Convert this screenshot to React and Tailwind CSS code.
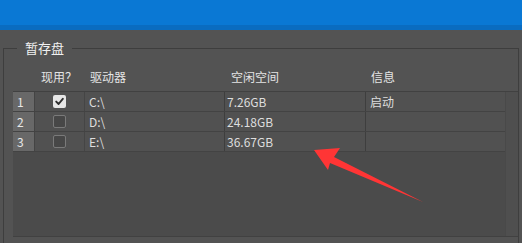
import React from "react";

const rows = [
  { n: "1", checked: true, drive: "C:\\", free: "7.26GB", info: "启动" },
  { n: "2", checked: false, drive: "D:\\", free: "24.18GB", info: "" },
  { n: "3", checked: false, drive: "E:\\", free: "36.67GB", info: "" },
];

function Check({ checked }) {
  if (checked) {
    return (
      <div className="w-[13px] h-[13px] rounded-[2px] bg-[#e6e6e6] flex items-center justify-center">
        <svg width="9" height="9" viewBox="0 0 9 9">
          <path d="M1.2 4.6 L3.6 7 L7.8 1.8" stroke="#2e2e2e" strokeWidth="1.9" fill="none" strokeLinecap="round" strokeLinejoin="round" />
        </svg>
      </div>
    );
  }
  return <div className="w-[13px] h-[13px] rounded-[2px] bg-[#474747] border border-[#7a7a7a]" />;
}

export default function App() {
  return (
    <div
      className="relative w-[522px] h-[243px] overflow-hidden bg-[#535353] text-[#e2e2e2]"
      style={{ fontFamily: '"Noto Sans CJK SC", "Noto Sans", sans-serif' }}
    >
      <div className="h-[25px] bg-[#0a78d4]" />
      <div className="h-[5px] bg-[#0a6cc0]" />

      <div className="relative mt-[18px] ml-[3px] w-[516px] h-[210px] border-t border-l border-r border-[#3e3e3e]">
        <div className="absolute left-[13px] top-[-10px] px-[8px] bg-[#535353] text-[13px] leading-[18px] text-[#f0f0f0]">
          暂存盘
        </div>

        <div className="mt-[14px] ml-[9px] flex h-[28px] text-[12px] leading-[28px] text-[#e4e4e4]">
          <div className="w-[22px]" />
          <div className="w-[50px] pl-[6px]">现用？</div>
          <div className="w-[140px] pl-[5px]">驱动器</div>
          <div className="w-[141px] pl-[6px]">空闲空间</div>
          <div className="w-[139px] pl-[5px]">信息</div>
        </div>

        <div className="ml-[9px] flex h-[146px] border-t border-b border-[#414141]">
          <div className="w-[492px] bg-[#4b4b4b]">
            {rows.map((r) => (
              <div key={r.n} className="flex h-[20px] border-b border-[#434343] bg-[#515151] text-[12px] leading-[19px] text-[#dedede]">
                <div className="w-[21px] pl-[4px] bg-[#686868] text-[#e8e8e8]">{r.n}</div>
                <div className="w-[1px] bg-[#444444]" />
                <div className="w-[49px] flex items-center justify-center">
                  <Check checked={r.checked} />
                </div>
                <div className="w-[1px] bg-[#454545]" />
                <div className="w-[139px] pl-[4px]">{r.drive}</div>
                <div className="w-[1px] bg-[#3e3e3e]" />
                <div className="w-[140px] pl-[2px]">{r.free}</div>
                <div className="w-[1px] bg-[#3e3e3e]" />
                <div className="w-[139px] pl-[4px]">{r.info}</div>
              </div>
            ))}
          </div>
          <div className="flex-1 bg-[#4f4f4f] border-l border-[#494949]" />
        </div>
      </div>

      <svg className="absolute left-0 top-0 pointer-events-none" width="522" height="243" viewBox="0 0 522 243">
        <polygon
          points="314,150 340,148 334,157 423,202 330,163 328,170"
          fill="#ff3535"
        />
      </svg>
    </div>
  );
}
